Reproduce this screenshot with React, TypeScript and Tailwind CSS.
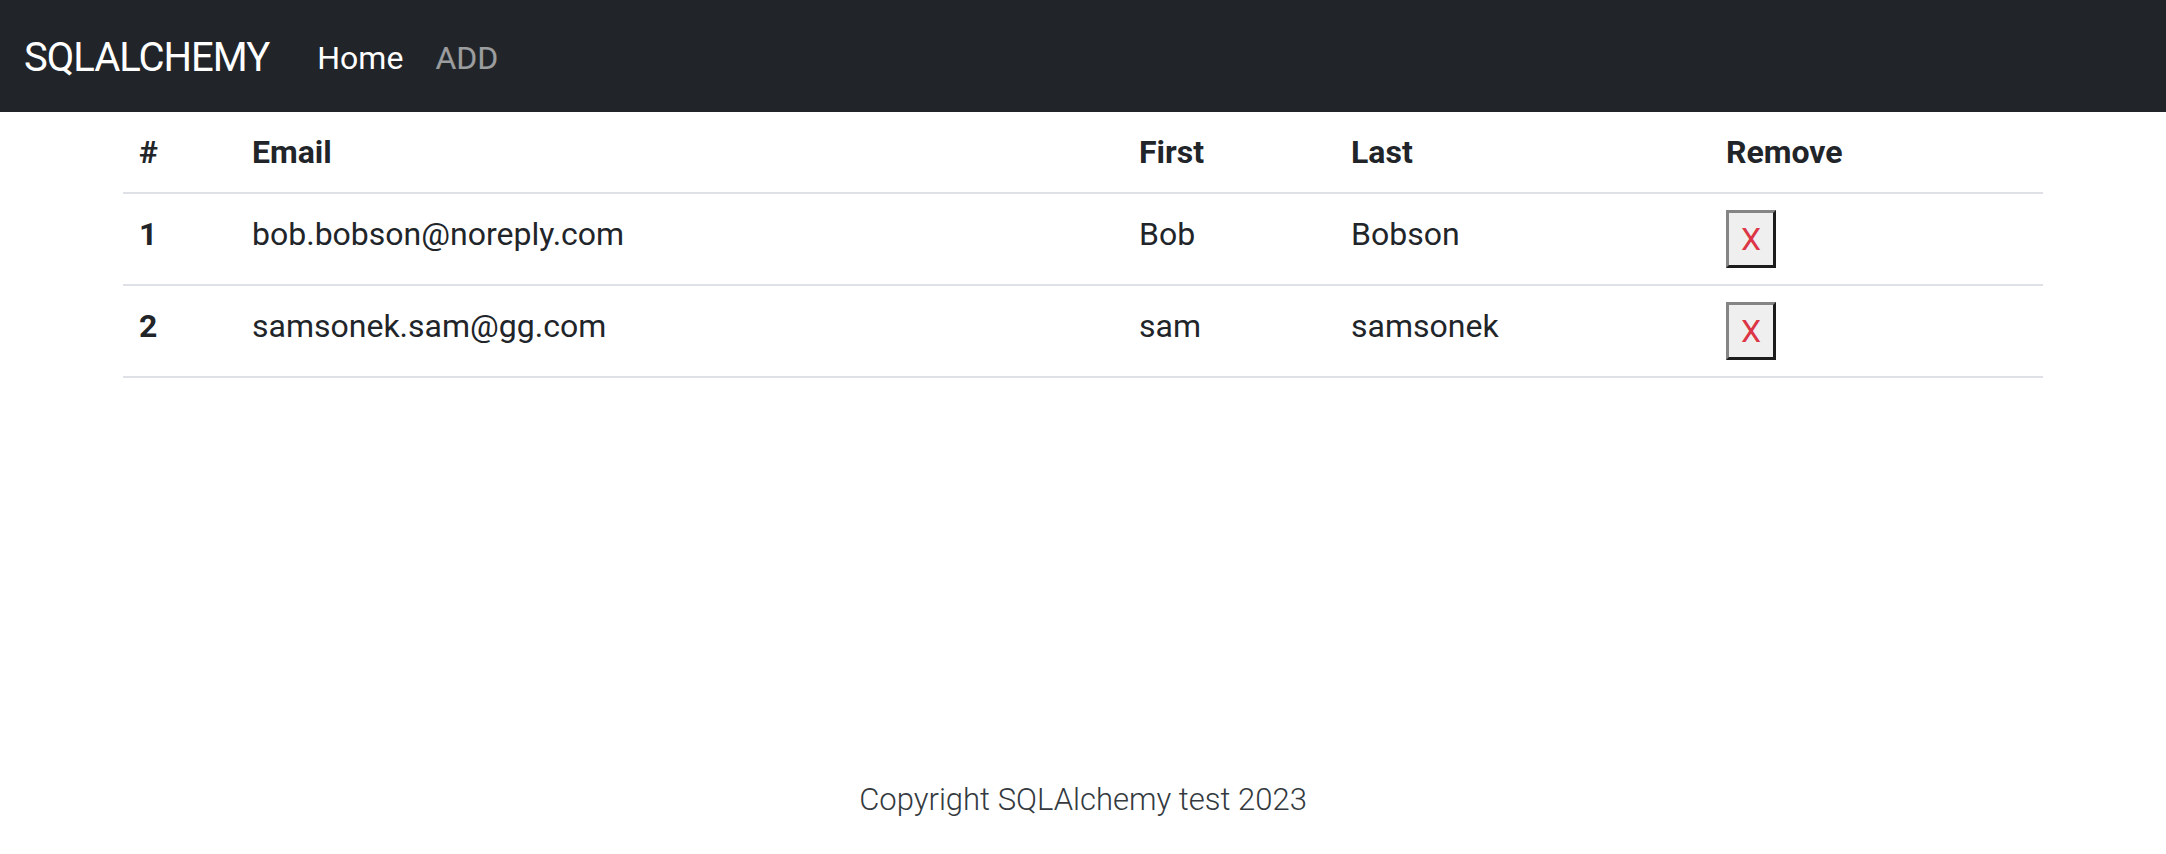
const users = [
  { id: 1, email: "bob.bobson@noreply.com", first: "Bob", last: "Bobson" },
  { id: 2, email: "samsonek.sam@gg.com", first: "sam", last: "samsonek" },
];

function RemoveButton() {
  return (
    <button
      type="button"
      className="flex h-[58px] w-[50px] items-center justify-center border-[3px] border-t-[#858585] border-l-[#858585] border-r-[#1c1c1c] border-b-[#1c1c1c] bg-[#efefef] text-[32px] leading-none text-[#dc3545]"
    >
      X
    </button>
  );
}

export default function App() {
  const cell = "border-b-2 border-[#dee2e6] p-[16px] align-top";

  return (
    <div className="flex min-h-[854px] flex-col bg-white font-['Roboto',sans-serif] text-[#212529]">
      {/* Navbar */}
      <nav className="flex h-[112px] items-center bg-[#212529] px-[24px] pt-[4px]">
        <a href="#" className="mr-[32px] text-[40px] leading-[60px] tracking-[-1px] text-white">
          SQLALCHEMY
        </a>
        <a href="#" className="px-[16px] text-[32px] leading-[48px] text-white">
          Home
        </a>
        <a href="#" className="px-[16px] text-[32px] leading-[48px] text-white/55">
          ADD
        </a>
      </nav>

      {/* Users table */}
      <main className="flex-1">
        <table className="mx-auto w-[1920px] table-fixed border-collapse text-left text-[32px] leading-[48px]">
          <thead>
            <tr>
              <th className={`${cell} w-[113px] font-bold`}>#</th>
              <th className={`${cell} w-[887px] font-bold`}>Email</th>
              <th className={`${cell} w-[212px] font-bold`}>First</th>
              <th className={`${cell} w-[375px] font-bold`}>Last</th>
              <th className={`${cell} font-bold`}>Remove</th>
            </tr>
          </thead>
          <tbody>
            {users.map((u) => (
              <tr key={u.id}>
                <th className={`${cell} font-bold`}>{u.id}</th>
                <td className={cell}>{u.email}</td>
                <td className={cell}>{u.first}</td>
                <td className={cell}>{u.last}</td>
                <td className={cell}>
                  <RemoveButton />
                </td>
              </tr>
            ))}
          </tbody>
        </table>
      </main>

      {/* Footer */}
      <footer className="pb-[30px] text-center text-[31px] font-light leading-[48px] text-[#343a40]">
        Copyright SQLAlchemy test 2023
      </footer>
    </div>
  );
}
